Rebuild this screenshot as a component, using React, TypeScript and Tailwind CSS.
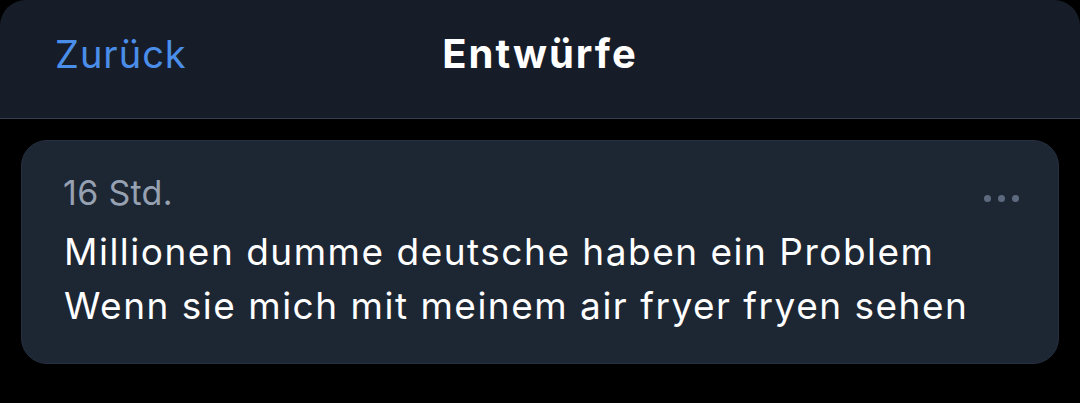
export default function App() {
  return (
    <div
      className="w-[1080px] h-[403px] bg-black overflow-hidden"
      style={{ fontFamily: 'Inter, "Noto Sans", sans-serif' }}
    >
      <header className="relative h-[119px] rounded-t-[26px] bg-[#171d28] border-b border-[#353e4c]">
        <button className="absolute left-[55px] top-[35px] text-[38px] leading-none tracking-[1px] text-[#4a8ee9]">
          Zurück
        </button>
        <h1 className="pt-[34px] text-center text-[40px] leading-none font-bold tracking-[2px] text-white">
          Entwürfe
        </h1>
      </header>

      <div className="pt-[21px] px-[21px]">
        <div className="relative rounded-[26px] bg-[#1d2633] border border-[#273040] pl-[42px] pr-[40px] pt-[35px] pb-[30px]">
          <div className="-ml-[1px] text-[34px] leading-none tracking-[0.3px] text-[#96a1b1]">16 Std.</div>
          <p className="mt-[15px] text-[37px] leading-[54px] tracking-[1.5px] text-white">
            Millionen dumme deutsche haben ein Problem
            <br />
            Wenn sie mich mit meinem air fryer fryen sehen
          </p>
          <div className="absolute right-[39px] top-[54px] flex gap-[7px]">
            <span className="w-[7px] h-[7px] rounded-full bg-[#5d697e]" />
            <span className="w-[7px] h-[7px] rounded-full bg-[#5d697e]" />
            <span className="w-[7px] h-[7px] rounded-full bg-[#5d697e]" />
          </div>
        </div>
      </div>
    </div>
  )
}
